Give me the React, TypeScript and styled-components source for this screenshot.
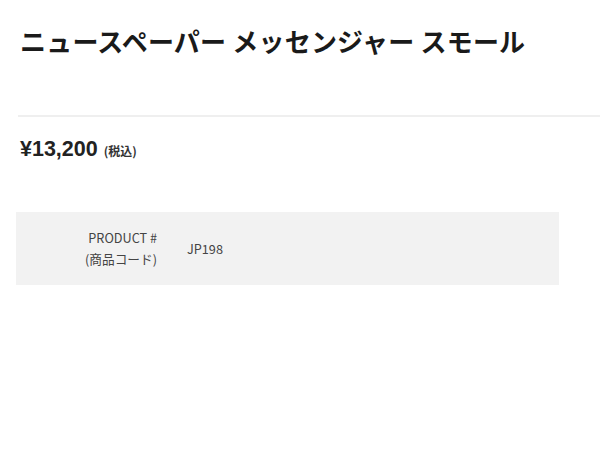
import styled, { createGlobalStyle } from 'styled-components'

const GlobalStyle = createGlobalStyle`
  body {
    margin: 0;
    background: #fff;
    font-family: "Noto Sans CJK JP", "Noto Sans", sans-serif;
    color: #222;
  }
`

const Page = styled.main`
  width: 600px;
  padding: 24px 0 0 20px;
  box-sizing: border-box;
`

const Title = styled.h1`
  margin: 0;
  font-size: 26px;
  line-height: 34px;
  font-weight: 700;
  color: #1a1a1a;
  letter-spacing: 0.2px;
`

const Spacer = styled.div`
  height: 42px;
  color: #fdfdfd;
  font-size: 12px;
  line-height: 42px;
`

const Rule = styled.hr`
  margin: 15px 0 0 -2px;
  border: 0;
  border-top: 2px solid #efefef;
`

const Price = styled.p`
  margin: 18px 0 0;
  font-family: "Liberation Sans", "Noto Sans CJK JP", sans-serif;
  font-size: 21.5px;
  font-weight: 700;
  color: #222;
  line-height: 28px;
  small {
    font-family: "Noto Sans CJK JP", sans-serif;
    font-size: 12px;
    margin-left: 6px;
    color: #333;
  }
`

const SpecTable = styled.table`
  margin: 47px 0 0 -4px;
  width: 543px;
  background: #f2f2f2;
  border-collapse: collapse;
  font-size: 12.7px;
  line-height: 21px;
  color: #444;
`

const Th = styled.th`
  width: 141px;
  text-align: right;
  font-weight: 400;
  padding: 15px 0 16px;
`

const Td = styled.td`
  text-align: left;
  padding: 0 0 0 30px;
`

export default function App() {
  return (
    <Page>
      <GlobalStyle />
      <Title>ニュースペーパー メッセンジャー スモール</Title>
      <Spacer>&nbsp;</Spacer>
      <Rule />
      <Price>
        ¥13,200<small>(税込)</small>
      </Price>
      <SpecTable>
        <tbody>
          <tr>
            <Th>
              PRODUCT #
              <br />
              (商品コード)
            </Th>
            <Td>JP198</Td>
          </tr>
        </tbody>
      </SpecTable>
    </Page>
  )
}
